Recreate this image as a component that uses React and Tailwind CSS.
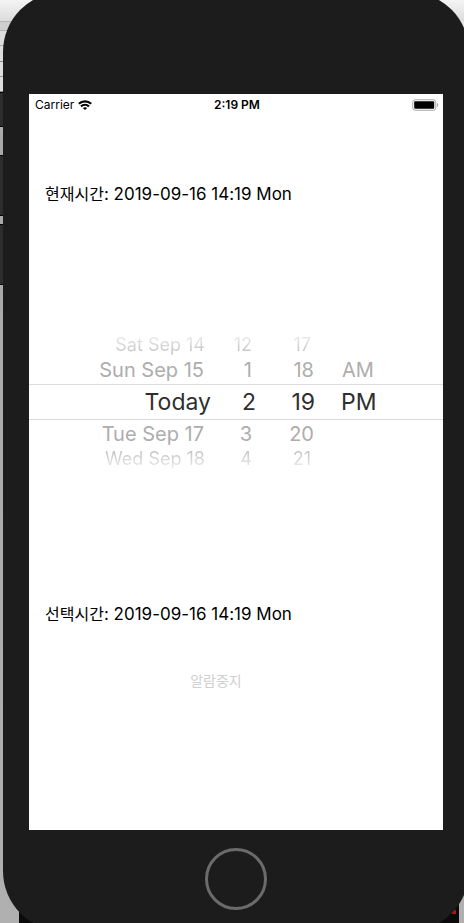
import { useState } from "react";

const columns = [
  { label: "Day", values: ["Sat Sep 14", "Sun Sep 15", "Today", "Tue Sep 17", "Wed Sep 18"], align: "items-end", near: "pr-[7px]", far: "pr-[6px]", sel: "justify-end" },
  { label: "Hour", values: ["12", "1", "2", "3", "4"], align: "items-end", near: "pr-1", far: "pr-1", sel: "justify-end" },
  { label: "Minute", values: ["17", "18", "19", "20", "21"], align: "items-end", near: "pr-px", far: "pr-1", sel: "justify-end" },
  { label: "Period", values: ["", "AM", "PM", "", ""], align: "items-start", near: "pl-[27px]", far: "pl-[27px]", sel: "justify-start pl-[26px]" },
];

function WheelColumn({ column }) {
  const { values, near, far, sel, align, label } = column;
  const styles = [
    `h-[22px] text-lg ${far}`,
    `h-7 text-xl text-[#adadad] ${near}`,
    `h-9 w-full border-y border-[#dcdcdc] text-[23px] text-[#2f2f2f] ${sel}`,
    `h-7 text-xl text-[#adadad] ${near}`,
    `h-[22px] text-lg ${far}`,
  ];
  const fades = [
    "bg-linear-to-t from-[#bdbdbd] to-[#f0f0f0] bg-clip-text text-transparent",
    "",
    "",
    "",
    "bg-linear-to-b from-[#bdbdbd] to-[#f0f0f0] bg-clip-text text-transparent",
  ];
  return (
    <div role="group" aria-label={label} className={`flex flex-col whitespace-nowrap ${align}`}>
      {values.map((value, i) =>
        value ? (
          <button key={i} type="button" aria-pressed={i === 2} className={`flex items-center leading-none ${styles[i]}`}>
            <span className={`leading-[22px] ${fades[i]}`}>{value}</span>
          </button>
        ) : (
          <div key={i} className={styles[i]} />
        )
      )}
    </div>
  );
}

function TimeLine({ label, value }) {
  return (
    <p className="px-4 text-[17px] leading-6">
      <span className="text-base leading-6">{label}</span>: {value}
    </p>
  );
}

function WifiIcon() {
  return (
    <svg width="14" height="10" viewBox="0 0 14 10" fill="none" stroke="#000" strokeWidth="2.2" aria-hidden="true">
      <path d="M0.8 3.8C4.3 0.5 9.7 0.5 13.2 3.8" />
      <path d="M3 6.4C5.3 4.3 8.7 4.3 11 6.4" />
      <path d="M7 10 4.8 7.9C6.1 6.9 7.9 6.9 9.2 7.9Z" fill="#000" stroke="none" />
    </svg>
  );
}

function BatteryIcon() {
  return (
    <svg width="27" height="12" viewBox="0 0 27 12" fill="none" aria-hidden="true">
      <rect x="0.75" y="0.75" width="23" height="10.5" rx="2.5" stroke="#a6a6a6" />
      <rect x="2.2" y="2.2" width="20" height="7.6" rx="1" fill="#000" />
      <path d="M25 4C26.6 4.4 26.6 7.6 25 8Z" fill="#a6a6a6" />
    </svg>
  );
}

function SideButtons() {
  return (
    <div className="flex w-[3px] shrink-0 flex-col pt-[92px]" aria-hidden="true">
      <div className="h-[35px] w-1 border-y border-black bg-[#2d2d2d]" />
      <div className="mt-7 h-[61px] w-1 border-y border-black bg-[#2d2d2d]" />
      <div className="mt-2 h-[61px] w-1 border-y border-black bg-[#2d2d2d]" />
    </div>
  );
}

function Backdrop() {
  return (
    <div className="absolute inset-0 bg-linear-to-b from-[#f2f2f2] via-[#a8a8a8] via-15% to-[#b0b0b0]" aria-hidden="true">
      <div className="h-[21px] bg-linear-to-b from-[#f4f4f4] to-[#dcdcdc]" />
      <div className="flex h-[71px] w-20 flex-col justify-between bg-[#dedede]">
        <div className="h-[10px] border-y border-[#b5b5b5] bg-[#cfcfcf]" />
        <div className="h-px bg-[#aaa]" />
        <div className="h-px bg-[#888]" />
        <div className="h-px bg-[#999]" />
        <div className="h-px bg-[#888]" />
      </div>
      <div className="absolute right-[5px] bottom-0 left-[19px] flex h-[25px] items-start justify-end bg-[#0b0b0b] pt-3 pr-[3px]">
        <div className="size-1 bg-[#a51616]" />
      </div>
    </div>
  );
}

export default function App() {
  const [ringing] = useState(false);
  return (
    <main className="relative flex min-h-screen overflow-hidden font-['Inter','Noto_Sans_CJK_KR',sans-serif] text-black">
      <Backdrop />
      <div className="relative flex grow">
        <SideButtons />
        <div className="-my-2 -mr-[5px] flex grow flex-col rounded-[60px] bg-[#1c1c1c] px-[26px] pt-[102px]">
          <section className="flex grow flex-col bg-white">
            <header className="grid h-5 grid-cols-3 items-center pt-px pr-1 pl-[6px] text-xs">
              <div className="flex items-center gap-1">
                <span>Carrier</span>
                <WifiIcon />
              </div>
              <time className="text-center font-semibold">2:19 PM</time>
              <div className="flex justify-end">
                <BatteryIcon />
              </div>
            </header>
            <div className="pt-[68px] pb-32">
              <TimeLine label="현재시간" value="2019-09-16 14:19 Mon" />
            </div>
            <div className="grid grid-cols-[182px_45px_59px_1fr]">
              {columns.map((column) => (
                <WheelColumn key={column.label} column={column} />
              ))}
            </div>
            <div className="pt-[132px] pb-[43px]">
              <TimeLine label="선택시간" value="2019-09-16 14:19 Mon" />
            </div>
            <button type="button" disabled={!ringing} className="mr-10 mb-[137px] self-center text-sm leading-6 text-[#cfcfcf]">
              알람중지
            </button>
          </section>
          <footer className="flex h-[101px] justify-center pt-[18px]">
            <button type="button" aria-label="Home" className="size-[62px] rounded-full border-3 border-[#6b6b6b]" />
          </footer>
        </div>
      </div>
    </main>
  );
}
